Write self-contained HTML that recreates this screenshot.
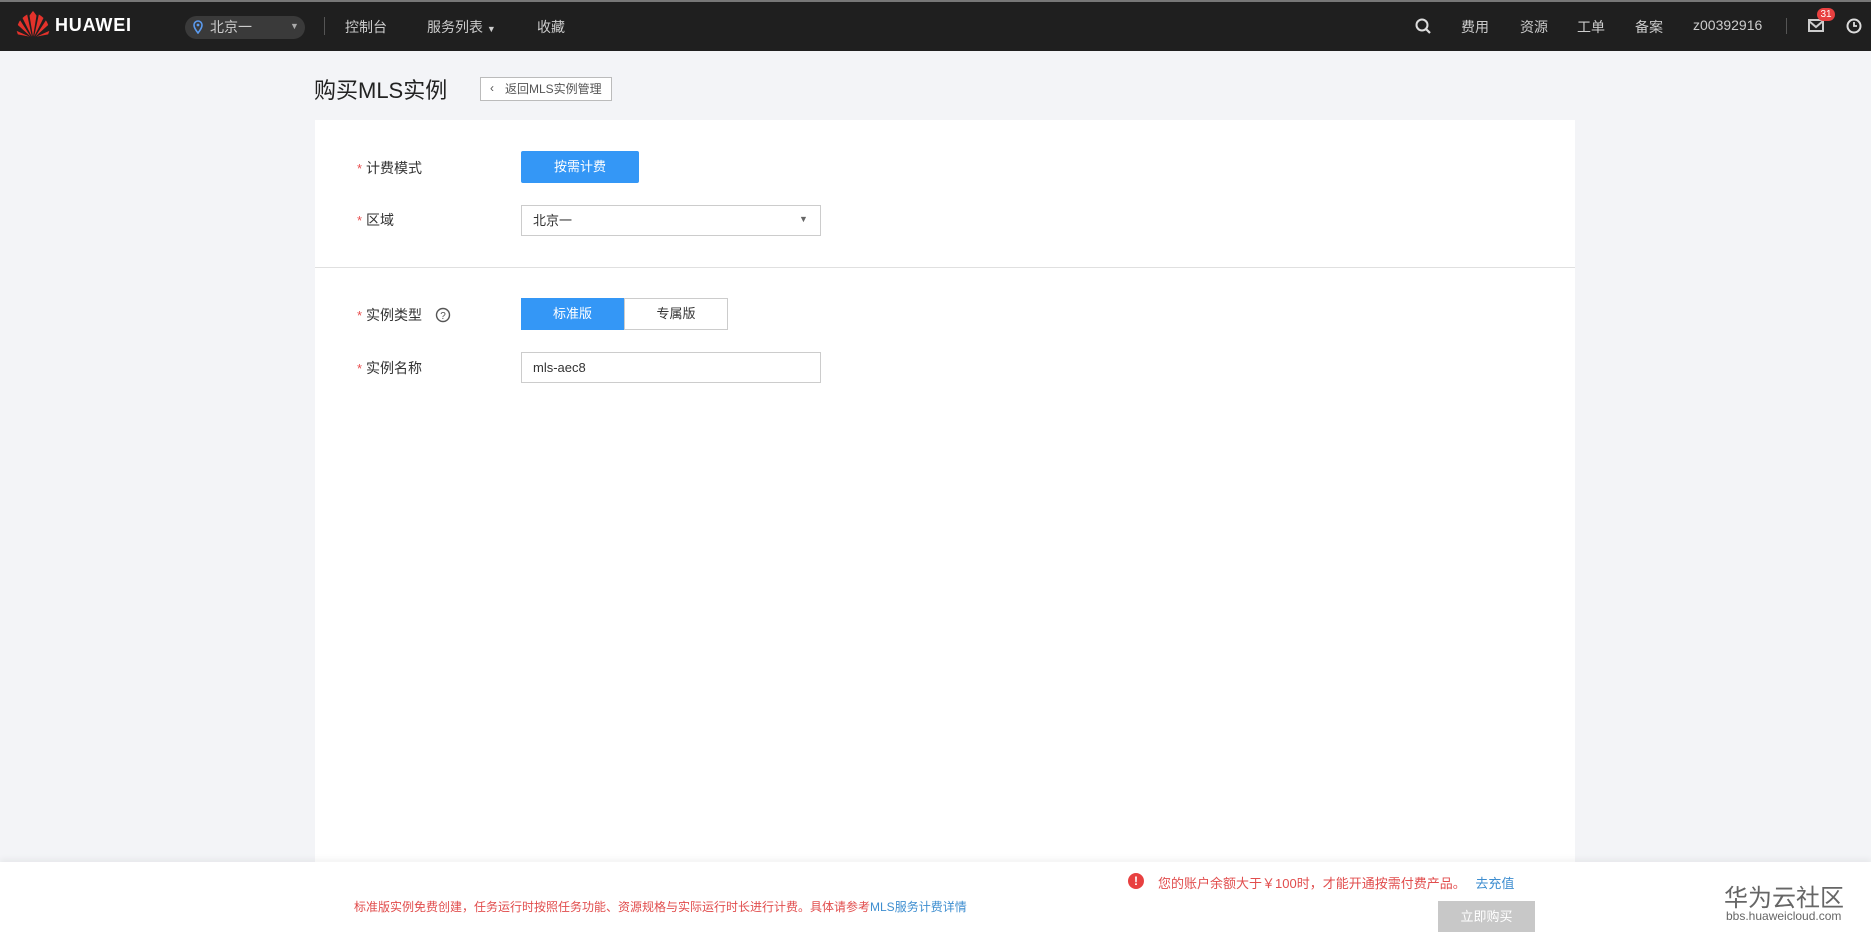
<!DOCTYPE html>
<html><head><meta charset="utf-8"><style>
*{box-sizing:border-box;margin:0;padding:0}
body{width:1871px;height:940px;overflow:hidden;background:#f3f4f7;font-family:"Liberation Sans","Noto Sans CJK SC",sans-serif;position:relative;color:#333}
.a{position:absolute;white-space:nowrap}
.hdr{position:absolute;left:0;top:0;width:1871px;height:51px;background:#1f1f1f;border-top:2px solid #777}
.nav{color:#ccc;font-size:14px;top:17px}
.lbl{font-size:14px;color:#333}
.star{color:#e84e4e;font-size:13px}
</style></head><body>
<div class="hdr"></div>
<svg class="a" style="left:16px;top:11px" width="34" height="28" viewBox="0 0 28 24"><g fill="#e3322b"><path d="M14 22 L11 4 Q13 1 14 0 Q15 1 17 4Z"/><path d="M13 22 L5 6 Q7 4 9 3Z"/><path d="M15 22 L23 6 Q21 4 19 3Z"/><path d="M12 22 L1 12 Q2 9 3 8Z"/><path d="M16 22 L27 12 Q26 9 25 8Z"/><path d="M11 22 L0 17 L1 20Z"/><path d="M17 22 L28 17 L27 20Z"/></g></svg>
<div class="a" style="left:55px;top:15px;color:#fff;font-weight:bold;font-size:18px;letter-spacing:0.8px">HUAWEI</div>
<div class="a" style="left:185px;top:16px;width:120px;height:23px;border-radius:12px;background:#3a3a3a"></div>
<svg class="a" style="left:193px;top:20px" width="10" height="14" viewBox="0 0 10 14"><path d="M5 13 C1 8 1 6 1 5 A4 4 0 0 1 9 5 C9 6 9 8 5 13Z" fill="none" stroke="#5b9bf0" stroke-width="1.6"/><circle cx="5" cy="5" r="1.4" fill="#5b9bf0"/></svg>
<div class="a nav" style="left:210px">北京一</div>
<div class="a" style="left:290px;top:21px;color:#aaa;font-size:9px">▼</div>
<div class="a" style="left:324px;top:17px;width:1px;height:18px;background:#555"></div>
<div class="a nav" style="left:345px">控制台</div>
<div class="a nav" style="left:427px">服务列表 <span style="font-size:9px">▼</span></div>
<div class="a nav" style="left:537px">收藏</div>
<svg class="a" style="left:1415px;top:18px" width="16" height="16" viewBox="0 0 16 16"><circle cx="7" cy="7" r="5.5" fill="none" stroke="#ddd" stroke-width="2"/><path d="M11 11 L15 15" stroke="#ddd" stroke-width="2.2"/></svg>
<div class="a nav" style="left:1461px">费用</div>
<div class="a nav" style="left:1520px">资源</div>
<div class="a nav" style="left:1577px">工单</div>
<div class="a nav" style="left:1635px">备案</div>
<div class="a nav" style="left:1693px">z00392916</div>
<div class="a" style="left:1786px;top:18px;width:1px;height:16px;background:#555"></div>
<svg class="a" style="left:1808px;top:19px" width="16" height="13" viewBox="0 0 16 13"><rect x="1" y="1" width="14" height="11" fill="none" stroke="#ccc" stroke-width="2"/><path d="M1 2 L8 8 L15 2" fill="none" stroke="#ccc" stroke-width="2"/></svg>
<div class="a" style="left:1817px;top:8px;width:18px;height:13px;border-radius:7px;background:#e84040;color:#fff;font-size:10px;text-align:center;line-height:13px">31</div>
<svg class="a" style="left:1846px;top:18px" width="16" height="16" viewBox="0 0 16 16"><circle cx="8" cy="8" r="6.5" fill="none" stroke="#ddd" stroke-width="2"/><path d="M8 4 V8 H11" fill="none" stroke="#ddd" stroke-width="1.8"/></svg>

<div class="a" style="left:314px;top:73px;font-size:22px;color:#222">购买MLS实例</div>
<div class="a" style="left:480px;top:77px;width:132px;height:24px;border:1px solid #bbb;background:#fff;font-size:12px;color:#555;line-height:22px;padding-left:24px">返回MLS实例管理</div>
<div class="a" style="left:490px;top:81px;font-size:12px;color:#555">‹</div>

<div class="a" style="left:315px;top:120px;width:1260px;height:742px;background:#fff"></div>
<div class="a" style="left:315px;top:267px;width:1260px;height:1px;background:#e0e0e0"></div>

<div class="a lbl" style="left:357px;top:158px"><span class="star">*</span> 计费模式</div>
<div class="a" style="left:521px;top:151px;width:118px;height:32px;background:#3497f6;border-radius:2px;color:#fff;font-size:13px;text-align:center;line-height:32px">按需计费</div>
<div class="a lbl" style="left:357px;top:210px"><span class="star">*</span> 区域</div>
<div class="a" style="left:521px;top:205px;width:300px;height:31px;border:1px solid #ccc;font-size:13px;line-height:29px;padding-left:11px">北京一</div>
<div class="a" style="left:799px;top:214px;font-size:9px;color:#666">▼</div>

<div class="a lbl" style="left:357px;top:305px"><span class="star">*</span> 实例类型</div>
<svg class="a" style="left:435px;top:307px" width="16" height="16" viewBox="0 0 16 16"><circle cx="8" cy="8" r="6.5" fill="none" stroke="#555" stroke-width="1.4"/><text x="8" y="12" font-size="10" text-anchor="middle" fill="#555" font-family="Liberation Sans">?</text></svg>
<div class="a" style="left:521px;top:298px;width:103px;height:32px;background:#3497f6;color:#fff;font-size:13px;text-align:center;line-height:32px">标准版</div>
<div class="a" style="left:624px;top:298px;width:104px;height:32px;border:1px solid #ccc;font-size:13px;text-align:center;line-height:30px;color:#333">专属版</div>
<div class="a lbl" style="left:357px;top:358px"><span class="star">*</span> 实例名称</div>
<div class="a" style="left:521px;top:352px;width:300px;height:31px;border:1px solid #ccc;font-size:13px;line-height:29px;padding-left:11px">mls-aec8</div>

<div class="a" style="left:0;top:862px;width:1871px;height:78px;background:#fff;box-shadow:0 -3px 6px rgba(0,0,0,0.05)"></div>
<div class="a" style="left:354px;top:898px;font-size:12px;color:#e14d4d">标准版实例免费创建，任务运行时按照任务功能、资源规格与实际运行时长进行计费。具体请参考<span style="color:#3e8ed0">MLS服务计费详情</span></div>
<div class="a" style="left:1128px;top:873px;width:16px;height:16px;border-radius:50%;background:#e84040;color:#fff;font-size:12px;font-weight:bold;text-align:center;line-height:16px">!</div>
<div class="a" style="left:1158px;top:873px;font-size:13px;color:#e14d4d">您的账户余额大于￥100时，才能开通按需付费产品。 <span style="color:#3e8ed0;margin-left:6px">去充值</span></div>
<div class="a" style="left:1438px;top:901px;width:97px;height:31px;background:#c8c8c8;color:#fff;font-size:13px;text-align:center;line-height:31px">立即购买</div>
<div class="a" style="left:1724px;top:878px;font-size:24px;color:#666">华为云社区</div>
<div class="a" style="left:1726px;top:909px;font-size:12px;color:#666">bbs.huaweicloud.com</div>
</body></html>
